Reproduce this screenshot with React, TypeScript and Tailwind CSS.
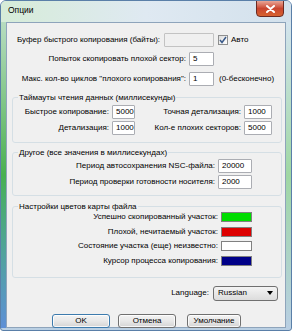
import React from "react";

const font = { fontFamily: '"Liberation Sans", Arial, sans-serif' };

function Input({ value, w, disabled }: { value?: string; w: string; disabled?: boolean }) {
  return (
    <div
      className={`${w} h-[14px] shrink-0 border ${
        disabled ? "border-[#c3c3c3] bg-[#f0f0f0]" : "border-[#abadb3] bg-white"
      } rounded-[1px] flex items-center pl-[3px] text-[8px] leading-none text-black`}
    >
      {value}
    </div>
  );
}

function Btn({ label, w, def }: { label: string; w: string; def?: boolean }) {
  return (
    <div
      className={`${w} h-[14px] rounded-[3px] border ${
        def ? "border-[#3d7bad]" : "border-[#707070]"
      } bg-gradient-to-b from-[#f3f3f3] via-[#e8e8e8] to-[#d4d4d4] flex items-center justify-center text-[8px] leading-none text-black shadow-[inset_0_0_0_1px_rgba(255,255,255,0.8)]`}
    >
      {label}
    </div>
  );
}

function Legend({ children }: { children: React.ReactNode }) {
  return <legend className="ml-[5px] px-[1px] text-[8px] leading-[9px] text-black">{children}</legend>;
}

export default function App() {
  return (
    <div className="w-[292px] h-[333px] bg-white overflow-hidden" style={font}>
      <div className="relative w-[292px] h-[331px] rounded-t-[6px] rounded-b-[3px] border border-[#5a7fa8] bg-gradient-to-b from-[#e4eef6] via-[#cfdeeb] to-[#b9cfe3] flex flex-col overflow-hidden">
        {/* title bar */}
        <div className="h-[21px] shrink-0 flex items-center pl-[7px] bg-gradient-to-r from-[#d6ecd8] via-[#dfe9f2] to-[#d3e1ec]">
          <span className="text-[8.5px] text-black leading-none mt-[-2px]">Опции</span>
        </div>
        {/* close button */}
        <div className="absolute left-[255px] top-[-1px] w-[28px] h-[17px] rounded-b-[4px] border border-[#6b2a22] bg-gradient-to-b from-[#e8a596] via-[#c9452f] to-[#d7622f] flex items-center justify-center">
          <svg width="9" height="8" viewBox="0 0 9 8">
            <path d="M1 1 L8 7 M8 1 L1 7" stroke="#fff" strokeWidth="2" strokeLinecap="round" />
          </svg>
        </div>
        <div className="flex flex-1">
          <div className="w-[5px] shrink-0 bg-gradient-to-b from-[#b7dcc0] via-[#47b04f] to-[#5e8fd6]" />
          {/* client */}
          <div className="w-[280px] h-[306px] border border-[#8ea4bb] bg-[#f0f0f0] flex flex-col text-[8px] leading-none text-black">
            {/* row 1 */}
            <div className="mt-[10px] h-[14px] flex items-center">
              <div className="w-[157px] pl-[10px] whitespace-nowrap">Буфер быстрого копирования (байты):</div>
              <Input w="w-[50px]" disabled />
              <div className="ml-[4px] w-[10px] h-[10px] border border-[#8e8f8f] bg-gradient-to-br from-[#dcdcdc] to-white flex items-center justify-center">
                <svg width="8" height="8" viewBox="0 0 8 8">
                  <path d="M1 4 L3 6.5 L7 1" stroke="#3a5a8a" strokeWidth="1.5" fill="none" />
                </svg>
              </div>
              <span className="ml-[3px]">Авто</span>
            </div>
            {/* row 2 */}
            <div className="mt-[5px] h-[14px] flex items-center">
              <div className="w-[182px] text-right pr-[3px] whitespace-nowrap">Попыток скопировать плохой сектор:</div>
              <Input w="w-[25px]" value="5" />
            </div>
            {/* row 3 */}
            <div className="mt-[6px] h-[14px] flex items-center">
              <div className="w-[182px] text-right pr-[3px] whitespace-nowrap">Макс. кол-во циклов "плохого копирования":</div>
              <Input w="w-[25px]" value="1" />
              <span className="ml-[5px]">(0-бесконечно)</span>
            </div>

            {/* group 1 */}
            <fieldset className="ml-[5px] mt-[7px] w-[270px] border border-[#d5dfe5] rounded-[3px] pb-[7px]">
              <Legend>Таймауты чтения данных (миллисекунды)</Legend>
              <div className="mt-[3px] h-[14px] flex items-center">
                <div className="w-[99px] text-right pr-[3px] whitespace-nowrap">Быстрое копирование:</div>
                <Input w="w-[23px]" value="5000" />
                <div className="w-[109px] text-right pr-[3px] whitespace-nowrap">Точная детализация:</div>
                <Input w="w-[28px]" value="1000" />
              </div>
              <div className="mt-[2px] h-[14px] flex items-center">
                <div className="w-[99px] text-right pr-[3px] whitespace-nowrap">Детализация:</div>
                <Input w="w-[23px]" value="1000" />
                <div className="w-[109px] text-right pr-[3px] whitespace-nowrap">Кол-е плохих секторов:</div>
                <Input w="w-[28px]" value="5000" />
              </div>
            </fieldset>

            {/* group 2 */}
            <fieldset className="ml-[5px] mt-[5px] w-[270px] border border-[#d5dfe5] rounded-[3px] pb-[6px]">
              <Legend>Другое (все значения в миллисекундах)</Legend>
              <div className="mt-[2px] h-[14px] flex items-center">
                <div className="w-[205px] text-right pr-[3px] whitespace-nowrap">Период автосохранения NSC-файла:</div>
                <Input w="w-[34px]" value="20000" />
              </div>
              <div className="mt-[2px] h-[14px] flex items-center">
                <div className="w-[205px] text-right pr-[3px] whitespace-nowrap">Период проверки готовности носителя:</div>
                <Input w="w-[34px]" value="2000" />
              </div>
            </fieldset>

            {/* group 3 */}
            <fieldset className="ml-[5px] mt-[6px] w-[270px] border border-[#d5dfe5] rounded-[3px] pb-[9px]">
              <Legend>Настройки цветов карты файла</Legend>
              <div className="mt-[-1px] flex flex-col gap-[0.5px]">
                {[
                  ["Успешно скопированный участок:", "bg-[#00dd00]"],
                  ["Плохой, нечитаемый участок:", "bg-[#dd0000]"],
                  ["Состояние участка (еще) неизвестно:", "bg-white"],
                  ["Курсор процесса копирования:", "bg-[#000088]"],
                ].map(([l, c]) => (
                  <div key={l} className="h-[14px] flex items-center">
                    <div className="w-[208px] text-right pr-[3px] whitespace-nowrap">{l}</div>
                    <div className={`w-[31px] h-[10px] border border-[#808080] ${c}`} />
                  </div>
                ))}
              </div>
            </fieldset>

            {/* language */}
            <div className="mt-[8px] h-[15px] flex items-center justify-end pr-[7px]">
              <span className="mr-[4px]">Language:</span>
              <div className="w-[65px] h-[15px] rounded-[3px] border border-[#707070] bg-gradient-to-b from-[#f4f4f4] to-[#dcdcdc] flex items-center pl-[4px] pr-[4px] justify-between">
                <span>Russian</span>
                <svg width="6" height="4" viewBox="0 0 6 4">
                  <path d="M0 0 L6 0 L3 4 Z" fill="#000" />
                </svg>
              </div>
            </div>

            {/* buttons */}
            <div className="mt-[13px] flex items-center">
              <div className="ml-[45px]">
                <Btn label="OK" w="w-[58px]" def />
              </div>
              <div className="ml-[8px]">
                <Btn label="Отмена" w="w-[58px]" />
              </div>
              <div className="ml-[11px]">
                <Btn label="Умолчание" w="w-[54px]" />
              </div>
            </div>
          </div>
          <div className="w-[5px] shrink-0 bg-gradient-to-b from-[#d4e4ee] via-[#9fd7a3] to-[#b9cfe3]" />
        </div>
        <div className="h-[2px] shrink-0" />
      </div>
    </div>
  );
}
